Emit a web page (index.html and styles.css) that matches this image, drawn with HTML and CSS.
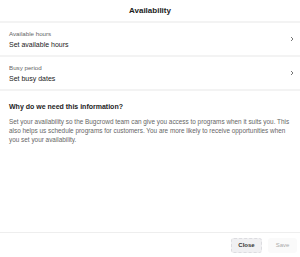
FILE: index.html
```html
<!DOCTYPE html>
<html lang="en">
<head>
    <meta charset="UTF-8">
    <meta name="viewport" content="width=device-width, initial-scale=1.0">
    <title>Availability</title>
    <link rel="stylesheet" href="styles.css">
</head>
<body>
    <div class="modal">
        <div class="cabecalho">
            <h2>Availability</h2>
        </div>
        <div class="opcao">
            <div class="textos">
                <span class="rotulo">Available hours</span>
                <span class="valor">Set available hours</span>
            </div>
            <svg class="seta" width="6" height="8" viewBox="0 0 6 8"><path d="M2 2 L4 4 L2 6" fill="none" stroke="#777" stroke-width="1"/></svg>
        </div>
        <div class="opcao">
            <div class="textos">
                <span class="rotulo">Busy period</span>
                <span class="valor">Set busy dates</span>
            </div>
            <svg class="seta" width="6" height="8" viewBox="0 0 6 8"><path d="M2 2 L4 4 L2 6" fill="none" stroke="#777" stroke-width="1"/></svg>
        </div>
        <div class="info">
            <h3>Why do we need this information?</h3>
            <p>Set your availability so the Bugcrowd team can give you access to programs when it suits you. This also helps us schedule programs for customers. You are more likely to receive opportunities when you set your availability.</p>
        </div>
        <div class="rodape">
            <button class="fechar">Close</button>
            <button class="salvar" disabled>Save</button>
        </div>
    </div>
</body>
</html>
```

FILE: styles.css
```css
* {
    padding: 0;
    margin: 0;
    box-sizing: border-box;
    font-family: 'Liberation Sans', Arial, Helvetica, sans-serif;
}

html, body {
    height: 100%;
    background: #fff;
    color: #222;
}

.modal {
    height: 100%;
    display: flex;
    flex-direction: column;
}

/* Cabecalho */
.cabecalho {
    height: 23px;
    display: flex;
    align-items: center;
    justify-content: center;
    border-bottom: 2px solid #f3f3f3;
}

.cabecalho h2 {
    font-size: 8px;
    font-weight: 700;
    color: #1c1c1c;
}

/* Opcoes */
.opcao {
    height: 34px;
    padding: 0 5px 0 9px;
    display: flex;
    align-items: center;
    justify-content: space-between;
    border-bottom: 2px solid #f3f3f3;
}

.opcao .textos {
    display: flex;
    flex-direction: column;
    gap: 4px;
}

.opcao .rotulo {
    font-size: 6.2px;
    color: #666;
}

.opcao .valor {
    font-size: 7px;
    color: #222;
}

/* Informacao */
.info {
    flex: 1;
    padding: 12px 9px 0 9px;
}

.info h3 {
    font-size: 7px;
    font-weight: 700;
    color: #1c1c1c;
    margin-bottom: 7px;
}

.info p {
    font-size: 6.4px;
    line-height: 9px;
    color: #666;
}

/* Rodape */
.rodape {
    height: 25px;
    border-top: 1px solid #eee;
    display: flex;
    justify-content: flex-end;
    align-items: center;
    gap: 6px;
    padding: 0 3px 0 0;
}

.rodape button {
    height: 15px;
    padding: 0 6px;
    font-size: 6px;
    font-weight: 700;
    border-radius: 3px;
    border: none;
}

.rodape .fechar {
    width: 31px;
    background: #f0f0f2;
    color: #333;
    border: 1px dashed #dcdce0;
}

.rodape .salvar {
    width: 29px;
    background: #fafafa;
    color: #aaa;
    font-weight: 400;
}
```
